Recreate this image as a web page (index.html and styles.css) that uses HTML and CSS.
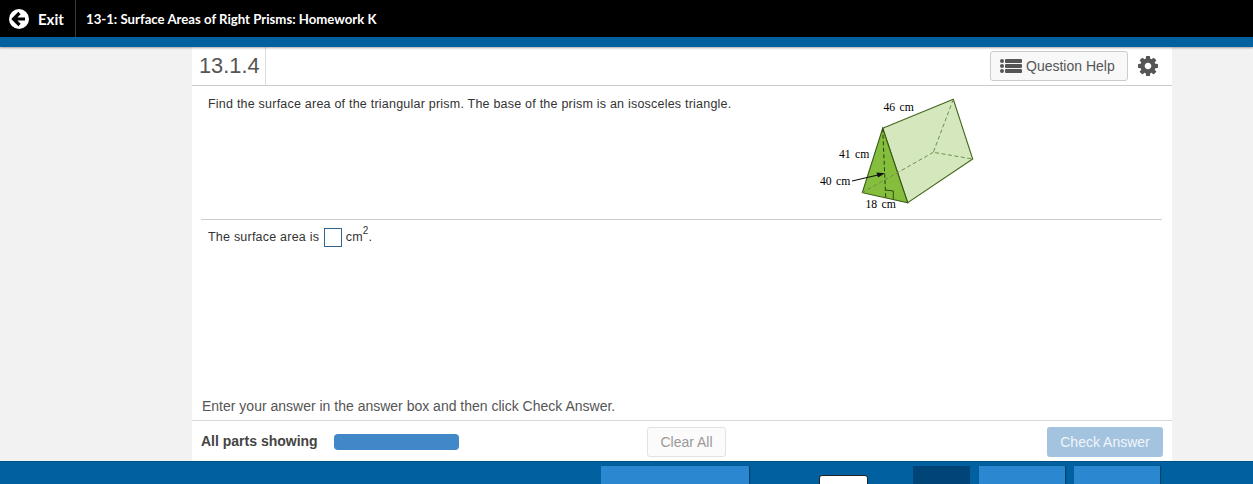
FILE: index.html
```html
<!DOCTYPE html>
<html lang="en">
<head>
    <meta charset="UTF-8">
    <meta name="viewport" content="width=device-width, initial-scale=1.0">
    <title>13-1: Surface Areas of Right Prisms: Homework K</title>
    <link rel="stylesheet" href="styles.css">
</head>
<body>
    <header class="topbar">
        <a class="exit">
            <svg class="exit-icon" viewBox="0 0 20 20" width="20" height="20">
                <circle cx="10" cy="10" r="10" fill="#fff"/>
                <path d="M10.5 4 L4.5 10 L10.5 16 M5 10 H16" fill="none" stroke="#000" stroke-width="3.2"/>
            </svg>
            Exit
        </a>
        <div class="assignment">13-1: Surface Areas of Right Prisms: Homework K</div>
    </header>
    <div class="bluebar"></div>

    <main class="page">
        <section class="sheet">
            <div class="question-head">
                <div class="question-num">13.1.4</div>
                <button class="help-btn">
                    <svg viewBox="0 0 22 14" width="22" height="14">
                        <circle cx="2" cy="2" r="2" fill="#555"/>
                        <circle cx="2" cy="7" r="2" fill="#555"/>
                        <circle cx="2" cy="12" r="2" fill="#555"/>
                        <rect x="5" y="0" width="17" height="4" rx="1" fill="#555"/>
                        <rect x="5" y="5" width="17" height="4" rx="1" fill="#555"/>
                        <rect x="5" y="10" width="17" height="4" rx="1" fill="#555"/>
                    </svg>
                    Question Help
                </button>
                <svg class="gear" viewBox="128 128 1536 1536" width="20" height="20">
                    <path fill="#555" d="M1152 896q0-106-75-181t-181-75-181 75-75 181 75 181 181 75 181-75 75-181zm512-109v222q0 12-8 23t-20 13l-185 28q-19 54-39 91 35 50 107 138 10 12 10 25t-9 23q-27 37-99 108t-94 71q-12 0-26-9l-138-108q-44 23-91 38-16 136-29 186-7 28-36 28h-222q-14 0-24.5-8.5t-11.5-21.5l-28-184q-49-16-90-37l-141 107q-10 9-25 9-14 0-25-11-126-114-165-168-7-10-7-23 0-12 8-23 15-21 51-66.5t54-70.5q-27-50-41-99l-183-27q-13-2-21-12.5t-8-23.5v-222q0-12 8-23t19-13l186-28q14-46 39-92-40-57-107-138-10-12-10-24 0-10 9-23 26-36 98.5-107.5t94.5-71.5q13 0 26 10l138 107q44-23 91-38 16-136 29-186 7-28 36-28h222q14 0 24.5 8.5t11.5 21.5l28 184q49 16 90 37l142-107q9-9 24-9 13 0 25 10 129 119 165 170 7 8 7 22 0 12-8 23-15 21-51 66.5t-54 70.5q26 50 41 98l183 28q13 2 21 12.5t8 23.5z"/>
                </svg>
            </div>

            <div class="question">
                <p class="question-text">Find the surface area of the triangular prism. The base of the prism is an isosceles triangle.</p>
                <svg class="prism" viewBox="810 92 180 120" width="180" height="120">
                    <polygon points="882.7,128.3 953.3,99.3 972.7,159 907.7,202.7" fill="#d5e8bd" stroke="#44661f" stroke-width="1.1"/>
                    <polygon points="882.7,128.3 907.7,202.7 862.3,192.7" fill="#85bd3c" stroke="#3a5a18" stroke-width="1.1"/>
                    <path class="dash" d="M953.3 99.3 L933.3 152.3 L972.7 159 M933.3 152.3 L862.3 192.7"/>
                    <path class="dash dark" d="M882.7 128.3 L885.7 197.5"/>
                    <path d="M885.6 190 L893.3 191 L893.3 199" fill="none" stroke="#2f4a12" stroke-width="1"/>
                    <path d="M852 181 L878 175" stroke="#111" stroke-width="1.2"/>
                    <polygon points="885,173.2 876.5,172.4 878,177.6" fill="#111"/>
                    <text class="dim" x="883.5" y="110.5">46 cm</text>
                    <text class="dim" x="839" y="157.5">41 cm</text>
                    <text class="dim" x="820" y="184.5">40 cm</text>
                    <text class="dim" x="865.5" y="207.5">18 cm</text>
                </svg>
            </div>

            <div class="answer">The surface area is<span class="answer-box"></span>cm<sup>2</sup>.</div>

            <div class="instruction">Enter your answer in the answer box and then click Check Answer.</div>

            <div class="actions">
                <span class="parts-label">All parts showing</span>
                <span class="progress"></span>
                <button class="clear-btn">Clear All</button>
                <button class="check-btn">Check Answer</button>
            </div>
        </section>
    </main>

    <footer class="footer">
        <div class="tab tab-wide"></div>
        <div class="tab-small"></div>
        <div class="tab tab-dark"></div>
        <div class="tab tab-nav"></div>
        <div class="tab tab-nav"></div>
    </footer>
</body>
</html>
```

FILE: styles.css
```css
* {
    margin: 0;
    padding: 0;
    box-sizing: border-box;
}
html, body {
    height: 100%;
}
body {
    display: flex;
    flex-direction: column;
    height: 100vh;
    overflow: hidden;
    background: #f2f2f2;
    font-family: "Liberation Sans", Arial, sans-serif;
    color: #333;
}
.topbar {
    display: flex;
    align-items: stretch;
    height: 37px;
    background: #000;
    color: #fff;
    font-family: Lato, sans-serif;
    font-weight: 700;
}
.exit {
    display: flex;
    align-items: center;
    gap: 9px;
    width: 76px;
    padding-left: 9px;
    font-size: 15px;
    border-right: 1px solid #3a3a3a;
}
.assignment {
    display: flex;
    align-items: center;
    padding-left: 10px;
    font-size: 13.2px;
}
.bluebar {
    height: 10px;
    background: #0060a0;
    box-shadow: 0 1px 2px rgba(0, 0, 0, 0.35);
    position: relative;
}
.page {
    flex: 1;
    display: flex;
    min-height: 0;
    padding-left: 192px;
}
.sheet {
    display: flex;
    flex-direction: column;
    width: 980px;
    background: #fff;
}
.question-head {
    display: flex;
    align-items: center;
    flex: none;
    height: 39px;
    padding-right: 14px;
    border-bottom: 1px solid #ccc;
}
.question-num {
    display: flex;
    align-items: center;
    width: 74px;
    height: 100%;
    padding-left: 7px;
    font-size: 21.8px;
    color: #555;
    border-right: 1px solid #ddd;
}
.help-btn {
    display: flex;
    align-items: center;
    gap: 4px;
    width: 138px;
    height: 30px;
    margin-left: auto;
    margin-right: 10px;
    padding-left: 9px;
    font: 14px "Liberation Sans", Arial, sans-serif;
    color: #555;
    background: #f8f8f8;
    border: 1px solid #ccc;
    border-radius: 3px;
}
.gear {
    flex: none;
}
.question {
    display: flex;
    flex: none;
    height: 134px;
    margin: 0 10px 0 9px;
    padding-left: 7px;
    border-bottom: 1px solid #ccc;
}
.question-text {
    flex: 1;
    padding-top: 11px;
    font-size: 12.5px;
    letter-spacing: 0.22px;
    color: #333;
}
.prism {
    margin-top: 6px;
    margin-right: 172px;
}
.dash {
    fill: none;
    stroke: #6f8f50;
    stroke-width: 1;
    stroke-dasharray: 4 2.5;
}
.dash.dark {
    stroke: #24400c;
}
.dim {
    font-family: "Liberation Serif", serif;
    font-size: 11.7px;
    word-spacing: 1.5px;
    fill: #000;
}
.answer {
    flex: none;
    height: 34px;
    padding: 8px 0 0 16px;
    font-size: 12.5px;
    letter-spacing: 0.22px;
}
.answer sup {
    position: relative;
    top: -2px;
    font-size: 10px;
    line-height: 0;
}
.answer-box {
    display: inline-block;
    width: 18px;
    height: 19px;
    margin: 0 3.5px 0 5px;
    vertical-align: -6px;
    background: #fff;
    border: 1px solid #2f6494;
}
.instruction {
    margin-top: auto;
    padding: 0 0 6px 10px;
    font-size: 14px;
    color: #555;
}
.actions {
    display: flex;
    align-items: center;
    flex: none;
    height: 41px;
    padding: 1px 9px 0;
    border-top: 1px solid #d8d8e0;
}
.parts-label {
    width: 133px;
    padding-bottom: 2px;
    font-size: 14px;
    font-weight: 700;
    color: #444;
}
.progress {
    width: 125px;
    height: 16px;
    background: #4088c8;
    border-radius: 4px;
}
.clear-btn {
    width: 79px;
    height: 30px;
    margin-left: 188px;
    font: 14px "Liberation Sans", Arial, sans-serif;
    color: #999;
    background: #fbfbfb;
    border: 1px solid #e2e2e2;
    border-radius: 3px;
}
.check-btn {
    width: 116px;
    height: 30px;
    margin-left: auto;
    font: 14px "Liberation Sans", Arial, sans-serif;
    color: #f0f5fa;
    background: #a3c3de;
    border: none;
    border-radius: 3px;
}
.footer {
    display: flex;
    align-items: flex-start;
    flex: none;
    height: 23px;
    padding: 4px 0 0 601px;
    background: #0060a0;
    border-top: 1px solid #004f86;
    overflow: hidden;
}
.tab {
    height: 30px;
    background: #2b88d0;
    box-shadow: 1px 0 1px rgba(0, 0, 0, 0.3);
}
.tab-wide {
    width: 148px;
}
.tab-small {
    width: 49px;
    height: 20px;
    margin: 9px 45px 0 70px;
    background: #fff;
    border: 1px solid #222;
    border-radius: 3px;
}
.tab-dark {
    width: 57px;
    background: #004478;
    box-shadow: none;
}
.tab-nav {
    width: 86px;
    margin-left: 9px;
}
```
